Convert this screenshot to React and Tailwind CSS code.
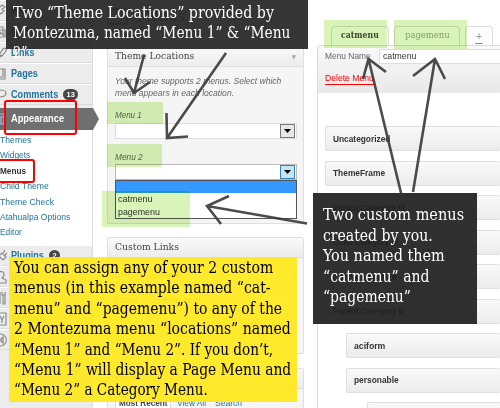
import React, { useLayoutEffect, useRef, useState } from "react";

const arrows = [
  "M144 55 L134 93 M125 78 L134 93 L150 82",
  "M226 53 L167 138 M166.5 113 L167 138 L188 136.5",
  "M402 197 L368.5 59 M363 79 L368.5 59 L386 72",
  "M413 192 L435 59 M413 76 L435 59 L445 79",
  "M307 223.5 L207 206 M229 196 L207 206 L221 224",
];

/* Condenses one line of text horizontally so that it spans w pixels. */
function Fit({ w, children, className = "" }) {
  const ref = useRef(null);
  const [scale, setScale] = useState(1);
  useLayoutEffect(() => {
    setScale(w / ref.current.offsetWidth);
  }, [w]);
  return (
    <span className={"block shrink-0 whitespace-nowrap " + className} style={{ width: w }}>
      <span ref={ref} className="inline-block origin-left" style={{ transform: `scaleX(${scale})` }}>
        {children}
      </span>
    </span>
  );
}

function MenuIcon({ kind }) {
  const d = {
    pin: "M1 13 L6 8 M4 6 L8 10 L11 7 L9 5 L12 3 L9 1 L4 6",
    media: "M1 2 H10 V9 H1 Z M3 5 H12 V12 H3 Z M4 10 L7 7 L11 11",
    link: "M5 13 L9 9 M6 9 L10 3 C12 1 14 3 13 5 L9 10 Z",
    page: "M1 2 H12 V12 H3 M10 2 V10 H3 M3 12 H12",
    comment: "M1 5 C1 1 13 1 13 5 C13 9 8 9 6 9 L3 12 V9 Q1 8 1 5",
    look: "M1 2 H11 V12 H1 Z M1 5 H11 M8 5 V12",
    plug: "M5 13 L7 10 M6 7 L10 11 M6 7 L9 4 L13 8 L10 11 M10 4 L12 1 M12 6 L14 4",
    user: "M6 2 C12 0 12 6 9 8 L13 10 V13 H5",
    tool: "M7 1 V5 M7 5 V13 M9 1 V4 H12 V1 M10 4 V13 H12 V4",
    gear: "M1 1 H13 V13 H1 M7 4 L9 8 L11 4 M9 8 V11",
    fold: "M4 2 A6 6 0 1 1 4 12 M10 4 L7 7 L10 10 Z",
  }[kind];
  return (
    <svg className={"-ml-[7px] h-[14px] w-[14px] shrink-0 " + (kind === "look" ? "text-[#9dbbe8]" : "text-[#8b8b8b]")} viewBox="0 0 14 14" fill="none" stroke="currentColor" strokeWidth="1.2">
      <path d={d} />
    </svg>
  );
}

function SideRow({ kind, label, w, badge, dim }) {
  return (
    <div className="flex h-[21px] items-center border-t border-b border-t-white border-b-[#dcdcdc]">
      <MenuIcon kind={kind} />
      <Fit w={w} className={"ml-[4px] text-[10.5px] " + (dim ? "text-[#999]" : "font-bold text-[#21759b]")}>{label}</Fit>
      {badge && (
        <span className="ml-[5px] flex h-[11px] min-w-[11px] items-center justify-center rounded-full bg-[#464646] px-[3.5px] text-[7.5px] font-bold text-white">
          {badge}
        </span>
      )}
    </div>
  );
}

function Sidebar() {
  const subs = [["Themes", 31], ["Widgets", 30], ["Menus", 26], ["Child Theme", 49], ["Theme Check", 54], ["Atahualpa Options", 70], ["Editor", 22]];
  return (
    <aside className="h-[408px] w-[93px] shrink-0 border-r border-[#ddd] bg-[#ececec]">
      <SideRow kind="pin" label="Posts" w={24} />
      <SideRow kind="media" label="Media" w={25} />
      <SideRow kind="link" label="Links" w={23} />
      <SideRow kind="page" label="Pages" w={27} />
      <SideRow kind="comment" label="Comments" w={47} badge="13" />
      <div className="mt-[3px] flex h-[22px] w-[99px] items-center bg-[#6f6f6f] [clip-path:polygon(0_0,93px_0,99px_50%,93px_100%,0_100%)]">
        <MenuIcon kind="look" />
        <Fit w={53} className="ml-[4px] text-[10.5px] font-bold text-white">Appearance</Fit>
      </div>
      <ul className="h-[115px] bg-white pt-[2px]">
        {subs.map(([s, w]) => (
          <li key={s} className={"h-[15.4px] text-[9.5px] leading-[15.4px] " + (s === "Menus" ? "font-bold text-[#333]" : "text-[#21759b]")}>
            <Fit w={w}>{s}</Fit>
          </li>
        ))}
      </ul>
      <SideRow kind="plug" label="Plugins" w={33} badge="2" />
      <SideRow kind="user" label="Users" w={23} />
      <SideRow kind="tool" label="Tools" w={22} />
      <SideRow kind="gear" label="Settings" w={35} />
      <SideRow kind="fold" label="Collapse menu" w={60} dim />
    </aside>
  );
}

function Panel({ title, w, className, children, caret }) {
  return (
    <section className={"shrink-0 rounded-[2px] border border-[#dfdfdf] bg-[#f5f5f5] " + className}>
      <h3 className="flex h-[20px] items-center justify-between border-b border-[#dfdfdf] bg-linear-to-b from-[#f9f9f9] to-[#ececec] px-[7px] font-['DejaVu_Serif'] text-[9.5px] text-[#464646]">
        <Fit w={w}>{title}</Fit>
        {caret && <span className="text-[6px] text-[#aaa]">▼</span>}
      </h3>
      {children}
    </section>
  );
}

function SelectBox({ active }) {
  return (
    <div className={"flex h-[16px] w-[182px] items-center justify-end border bg-white " + (active ? "border-[#bbb]" : "border-[#ddd]")}>
      <div className={"mr-px flex h-[14px] w-[15px] items-center justify-center border " + (active ? "border-[#3c7fb1] bg-[#c4e5f6]" : "border-[#777] bg-[#e8e8e8]")}>
        <svg className="h-[4px] w-[7px]" viewBox="0 0 7 4"><path d="M0 0H7L3.5 4Z" fill="#000" /></svg>
      </div>
    </div>
  );
}

function Middle() {
  return (
    <main className="ml-[14px] flex h-[408px] w-[197px] shrink-0 flex-col">
      <div className="flex h-[46px] shrink-0 items-start pt-[8px]">
        <div className="h-[17px] w-[21px] rounded-[2px] border-2 border-[#888] bg-[#eee]" />
        <Fit w={48} className="ml-[9px] font-['DejaVu_Serif'] text-[15px] leading-[17px] text-[#464646]">Menus</Fit>
      </div>
      <Panel title="Theme Locations" w={79} caret className="h-[178px]">
        <div className="px-[7px] text-[9.5px] text-[#666]">
          <div className="mt-[8px] italic leading-[12px]">
            <Fit w={166}>Your theme supports 2 menus. Select which</Fit>
            <Fit w={119}>menu appears in each location.</Fit>
          </div>
          <div className="mt-[10px] h-[14px] italic leading-[12px]"><Fit w={27}>Menu 1</Fit></div>
          <SelectBox />
          <div className="mt-[11px] h-[14px] italic leading-[14px]"><Fit w={28}>Menu 2</Fit></div>
          <SelectBox active />
          <div className="h-[39px] w-[182px] border border-[#555] bg-white text-[#333]">
            <div className="h-[12px] bg-[#3399ff]" />
            <div className="h-[13px] pl-[2px] leading-[12px]"><Fit w={34}>catmenu</Fit></div>
            <div className="h-[13px] pl-[2px] leading-[12px]"><Fit w={42}>pagemenu</Fit></div>
          </div>
        </div>
      </Panel>
      <Panel title="Custom Links" w={64} className="mt-[13px] h-[117px]">
        <div className="flex flex-col px-[7px] text-[9px] italic text-[#666]">
          <div className="mt-[8px] flex h-[19px] items-center justify-between">
            <Fit w={17}>URL</Fit>
            <span className="flex h-[17px] w-[142px] items-center border border-[#ddd] bg-white px-[3px] not-italic">http://</span>
          </div>
          <div className="mt-[6px] flex h-[19px] items-center justify-between">
            <Fit w={22}>Label</Fit>
            <span className="flex h-[17px] w-[142px] items-center border border-[#ddd] bg-white px-[3px]">Menu Item</span>
          </div>
          <div className="mt-[9px] flex w-[62px] justify-center self-end rounded-full border border-[#bbb] not-italic"><Fit w={46}>Add to Menu</Fit></div>
        </div>
      </Panel>
      <Panel title="Pages" w={26} className="mt-[14px] h-[60px]">
        <div className="flex gap-[9px] pt-[7px] pl-[7px] text-[9.5px] leading-[12px] text-[#21759b]">
          <span className="rounded-t border border-[#ddd] bg-white px-[3px] font-bold text-[#444]"><Fit w={48}>Most Recent</Fit></span>
          <Fit w={29} className="-ml-[3px] pt-px">View All</Fit>
          <Fit w={27} className="pt-px">Search</Fit>
        </div>
      </Panel>
    </main>
  );
}

function Item({ label, w, className = "" }) {
  return (
    <div className={"flex h-[25px] shrink-0 items-center rounded-[2px] border border-r-0 border-[#dfdfdf] bg-linear-to-b from-[#f9f9f9] to-[#ececec] pt-px pl-[7px] text-[9.5px] font-bold text-[#333] " + className}>
      {label && <Fit w={w}>{label}</Fit>}
    </div>
  );
}

function Right() {
  return (
    <section className="ml-[13px] flex h-[408px] w-[183px] shrink-0 flex-col">
      <div className="mt-[26px] flex h-[19px] gap-[5px] pl-[14px] font-['DejaVu_Serif'] text-[9px]">
        <div className="flex w-[58px] items-center justify-center rounded-t border border-b-0 border-[#ddd] font-bold text-[#464646]"><Fit w={38}>catmenu</Fit></div>
        <div className="flex w-[66px] items-center justify-center rounded-t border border-b-0 border-[#ddd] text-[#a0a0a0]"><Fit w={45}>pagemenu</Fit></div>
        <div className="flex w-[28px] items-center justify-center rounded-t border border-b-0 border-[#ddd] text-[#888]"><span className="leading-[12px] underline underline-offset-4">+</span></div>
      </div>
      <div className="flex h-[363px] flex-col overflow-hidden rounded-tl border-t border-l border-[#ddd] bg-white">
        <div className="h-[47px] shrink-0 bg-linear-to-b from-[#f9f9f9] to-[#e9e9e9] pl-[7px] text-[9.5px]">
          <div className="flex h-[21px] items-center gap-[8px] text-[#666]">
            <Fit w={46}>Menu Name</Fit>
            <span className="flex h-[15px] flex-1 items-center border border-r-0 border-[#ddd] bg-white pl-[3px] text-[#333]"><Fit w={33}>catmenu</Fit></span>
          </div>
          <div className="mt-[4px] w-[49px] border-b border-[#f00] leading-[13px] text-[#f00]"><Fit w={49}>Delete Menu</Fit></div>
        </div>
        <div className="flex flex-col gap-[9.5px] pt-[33px] pl-[7px]">
          <Item label="Uncategorized" w={57} />
          <Item label="ThemeFrame" w={52} />
          <Item label="Parent Category III" w={72} />
          <Item label="Child Category III" w={65} />
          <Item label="Child Category II" w={63} />
          <Item label="Parent Category II" w={70} />
          <Item label="aciform" w={31} className="ml-[21px]" />
          <Item label="personable" w={45} className="ml-[21px]" />
          <Item className="ml-[42px]" />
        </div>
      </div>
    </section>
  );
}

function Lines({ items }) {
  return items.map(([t, w]) => <Fit key={t} w={w}>{t}</Fit>);
}

export default function App() {
  return (
    <div className="relative flex h-[408px] w-[500px] overflow-hidden bg-white font-['Liberation_Sans',sans-serif]">
      <Sidebar />
      <Middle />
      <Right />

      <div className="absolute top-[102px] left-[107px] h-[22px] w-[56px] bg-[#d9f4b8] mix-blend-multiply" />
      <div className="absolute top-[144px] left-[107px] h-[23px] w-[55px] bg-[#d9f4b8] mix-blend-multiply" />
      <div className="absolute top-[191px] left-[102px] h-[36px] w-[88px] bg-[#d9f4b8] mix-blend-multiply" />
      <div className="absolute top-[20px] left-[324px] h-[28px] w-[63px] bg-[#d9f4b8] mix-blend-multiply" />
      <div className="absolute top-[20px] left-[394px] h-[29px] w-[73px] bg-[#d9f4b8] mix-blend-multiply" />

      <div className="absolute top-[100px] left-[4px] h-[35px] w-[73px] rounded-[3px] border-2 border-[#f00]" />
      <div className="absolute top-[159px] -left-[3px] h-[24px] w-[38px] rounded-[3px] border-2 border-[#f00]" />

      <div className="absolute top-0 left-[6px] h-[49px] w-[302px] bg-[#262626]/93 pt-[3px] pl-[7px] font-['DejaVu_Serif_Condensed','DejaVu_Serif',serif] text-[16px] leading-[20px] text-white">
        <Lines items={[["Two “Theme Locations” provided by", 261], ["Montezuma, named “Menu 1” & “Menu", 277], ["2”", 15]]} />
      </div>
      <div className="absolute top-[193px] left-[313px] h-[131px] w-[164px] bg-[#202020]/93 pt-[12px] pl-[10px] font-['DejaVu_Serif_Condensed','DejaVu_Serif',serif] text-[16px] leading-[20.5px] text-white">
        <Lines items={[["Two custom menus", 141], ["created by you.", 110], ["You named them", 122], ["“catmenu” and", 106], ["“pagemenu”", 88]]} />
      </div>
      <div className="absolute top-[257px] left-[9px] h-[145px] w-[288px] bg-[#ffe81c]/93 pt-px pl-[5px] font-['DejaVu_Serif_Condensed','DejaVu_Serif',serif] text-[16px] leading-[20.4px] text-black">
        <Lines items={[["You can assign any of your 2 custom", 259], ["menus (in this example named “cat-", 257], ["menu” and “pagemenu”) to any of the", 268], ["2 Montezuma menu “locations” named", 277], ["“Menu 1” and “Menu 2”. If you don’t,", 259], ["“Menu 1” will display a Page Menu and", 277], ["“Menu 2” a Category Menu.", 194]]} />
      </div>

      <svg className="absolute top-0 left-0 h-[408px] w-[500px]" viewBox="0 0 500 408" fill="none" stroke="#333" strokeOpacity="0.88" strokeWidth="2.6">
        {arrows.map((d) => <path key={d} d={d} />)}
      </svg>
    </div>
  );
}
